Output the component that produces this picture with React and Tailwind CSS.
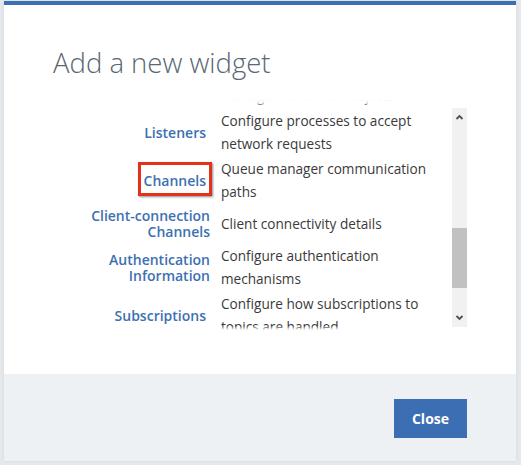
import React from "react";

const rows = [
  { label: ["Queue Managers"], desc: ["Create and manage queue", "managers and their objects"], single: true },
  { label: ["Listeners"], desc: ["Configure processes to accept", "network requests"], single: true },
  { label: ["Channels"], desc: ["Queue manager communication", "paths"], single: true, highlight: true },
  { label: ["Client-connection", "Channels"], desc: ["Client connectivity details"] },
  { label: ["Authentication", "Information"], desc: ["Configure authentication", "mechanisms"] },
  { label: ["Subscriptions"], desc: ["Configure how subscriptions to", "topics are handled"], single: true },
];

function Row({ row }) {
  return (
    <div className="flex items-center min-h-[36px]">
      <div
        className={
          "w-[157px] shrink-0 text-right text-[14px] leading-[16px] font-semibold text-[#3d70b2] " +
          (row.single ? "pr-[4px]" : "")
        }
      >
        {row.highlight ? (
          <span className="relative inline-block">
            {row.label[0]}
            <span className="absolute -left-[6px] -right-[6px] -top-[11px] -bottom-[7px] border-[3px] border-[#e3321c] shadow-[1px_1px_2px_rgba(0,0,0,0.45)]" />
          </span>
        ) : (
          row.label.map((l, i) => <div key={i}>{l}</div>)
        )}
      </div>
      <div className="ml-[11px] flex-1 text-[13.6px] leading-[22.5px] text-[#3a3a3a]">
        {row.desc.map((d, i) => (
          <div key={i}>{d}</div>
        ))}
      </div>
    </div>
  );
}

export default function App() {
  return (
    <div
      className="w-[521px] h-[465px] bg-[#e6e9ec] pt-[1px] pl-[4px] overflow-hidden"
      style={{ fontFamily: '"Open Sans", "Liberation Sans", sans-serif' }}
    >
      <div className="w-[512px] h-[460px] bg-white border-t-4 border-[#3d70b2] flex flex-col shadow-[0_0_3px_rgba(0,0,0,0.08)]">
        <div className="flex-1 flex flex-col">
          <h1 className="mt-[42px] ml-[49px] text-[27.5px] leading-[32px] font-light text-[#5a6872]">
            Add a new widget
          </h1>
          <div className="relative mt-[21px] ml-[49px] w-[414px] h-[230px] overflow-hidden">
            <div className="-mt-[38px] flex flex-col gap-[3px] pr-[20px]">
              {rows.map((r, i) => (
                <Row key={i} row={r} />
              ))}
            </div>
            <div className="absolute left-0 right-[16px] top-0 h-[6px] bg-gradient-to-b from-white via-white/80 to-white/0" />
            <div className="absolute left-0 right-[16px] bottom-0 h-[4px] bg-gradient-to-t from-white to-white/0" />
            <div className="absolute right-0 top-[8px] w-[15px] h-[219px] bg-[#f1f1f1] flex flex-col items-center">
              <svg width="15" height="17" viewBox="0 0 15 17" className="shrink-0">
                <path d="M4.5 11 L7.5 8 L10.5 11" fill="none" stroke="#505050" strokeWidth="1.8" />
              </svg>
              <div className="mt-[103px] w-[15px] h-[60px] bg-[#c1c1c1]" />
              <div className="flex-1" />
              <svg width="15" height="17" viewBox="0 0 15 17" className="shrink-0">
                <path d="M4.5 6 L7.5 9 L10.5 6" fill="none" stroke="#505050" strokeWidth="1.8" />
              </svg>
            </div>
          </div>
        </div>
        <div className="h-[87px] bg-[#eef1f4] flex items-center justify-end pr-[49px] pt-[2px]">
          <button className="w-[73px] h-[39px] bg-[#3c6eb4] text-white text-[14px] font-bold">
            Close
          </button>
        </div>
      </div>
    </div>
  );
}
